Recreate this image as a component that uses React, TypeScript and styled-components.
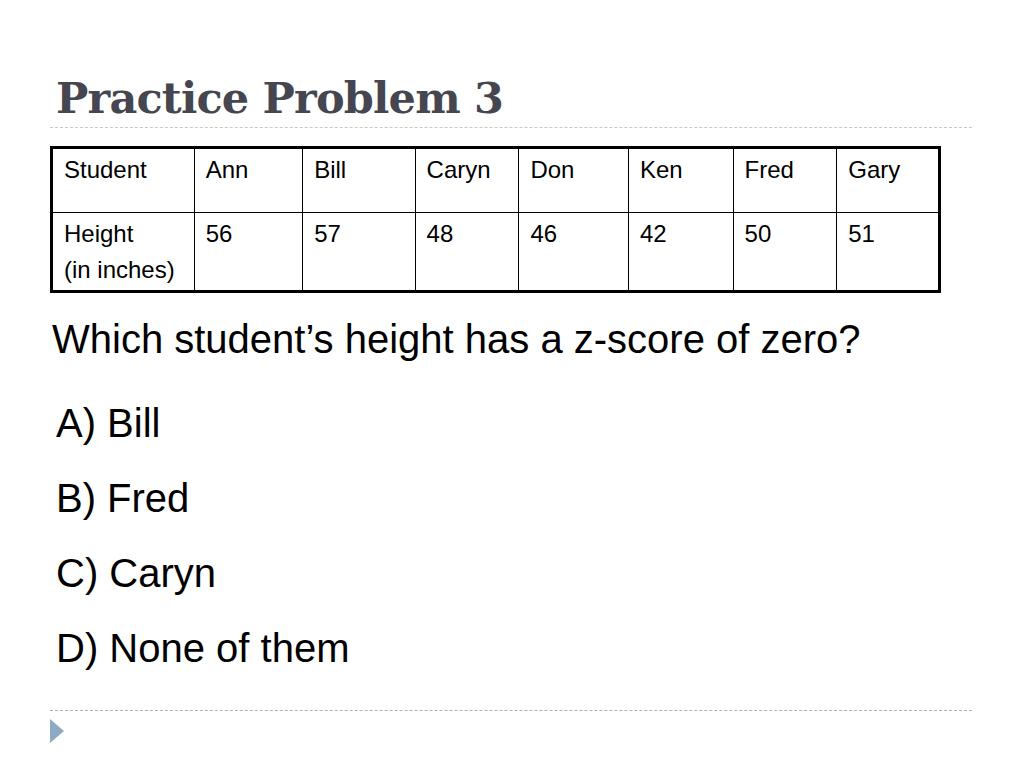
import React from "react";
import styled, { createGlobalStyle } from "styled-components";

const Global = createGlobalStyle`
  html, body { margin: 0; padding: 0; background: #ffffff; }
  body { width: 1024px; height: 768px; overflow: hidden; }
`;

const Slide = styled.div`
  width: 1024px;
  height: 768px;
  box-sizing: border-box;
  padding: 70px 52px 0 50px;
  display: flex;
  flex-direction: column;
  font-family: "Liberation Sans", Arial, sans-serif;
  color: #000;
`;

const Title = styled.h1`
  margin: 0 0 1px 6px;
  font-family: "DejaVu Serif", "Liberation Serif", serif;
  font-weight: bold;
  font-size: 43px;
  line-height: 56px;
  color: #464650;
  letter-spacing: -0.8px;
`;

const Rule = styled.div<{ $color: string }>`
  height: 0;
  border-top: 1px dashed ${(p) => p.$color};
`;

const Table = styled.table`
  margin-top: 18px;
  width: 891px;
  border-collapse: collapse;
  border: 3px solid #000;
  font-size: 24px;
  line-height: 36px;
`;

const Cell = styled.td<{ $w: number; $h: number }>`
  width: ${(p) => p.$w}px;
  height: ${(p) => p.$h}px;
  border: 1.5px solid #000;
  padding: 3px 8px 0 11px;
  vertical-align: top;
  text-align: left;
  box-sizing: border-box;
`;

const Question = styled.p`
  margin: 16px 0 0 2px;
  font-size: 40px;
  line-height: 60px;
`;

const Options = styled.div`
  margin: 31px 0 0 6px;
  display: flex;
  flex-direction: column;
`;

const Option = styled.div`
  font-size: 40px;
  line-height: 46px;
  height: 75px;
`;

const Footer = styled.div`
  margin-top: auto;
  margin-bottom: 25px;
  display: flex;
  flex-direction: column;
  gap: 8px;
`;

const widths = [143, 109, 113, 104, 110, 105, 104, 103];
const names = ["Student", "Ann", "Bill", "Caryn", "Don", "Ken", "Fred", "Gary"];
const heights = ["Height\n(in inches)", "56", "57", "48", "46", "42", "50", "51"];

export default function App() {
  return (
    <>
      <Global />
      <Slide>
        <Title>Practice Problem 3</Title>
        <Rule $color="#c8c8c8" />
        <Table>
          <tbody>
            <tr>
              {names.map((n, i) => (
                <Cell key={n} $w={widths[i]} $h={65}>{n}</Cell>
              ))}
            </tr>
            <tr>
              {heights.map((h, i) => (
                <Cell key={i} $w={widths[i]} $h={79}>
                  {h.split("\n").map((l, j) => (
                    <div key={j}>{l}</div>
                  ))}
                </Cell>
              ))}
            </tr>
          </tbody>
        </Table>
        <Question>Which student’s height has a z-score of zero?</Question>
        <Options>
          <Option>A) Bill</Option>
          <Option>B) Fred</Option>
          <Option>C) Caryn</Option>
          <Option>D) None of them</Option>
        </Options>
        <Footer>
          <Rule $color="#9fb4c8" />
          <svg width="14" height="24" viewBox="0 0 14 24">
            <polygon points="0,0 14,12 0,24" fill="#8ea9c4" />
          </svg>
        </Footer>
      </Slide>
    </>
  );
}
